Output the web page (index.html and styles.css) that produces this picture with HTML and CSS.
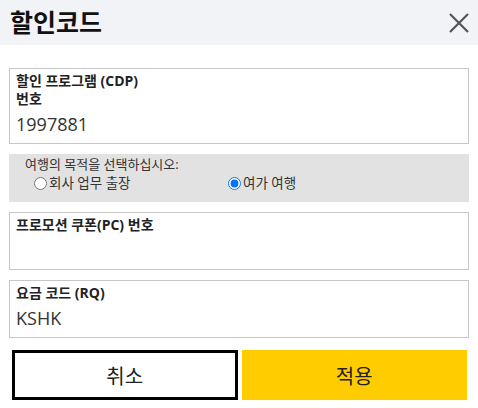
FILE: index.html
```html
<!DOCTYPE html>
<html lang="ko">
<head>
    <meta charset="UTF-8">
    <title>할인코드</title>
    <link rel="stylesheet" href="styles.css">
</head>
<body>
    <div class="header">
        <h1>할인코드</h1>
        <button class="close" type="button" aria-label="닫기">
            <svg width="20" height="20" viewBox="0 0 20 20"><path d="M1 1L19 19M19 1L1 19" stroke="#555" stroke-width="2.2" fill="none"/></svg>
        </button>
    </div>
    <form class="form">
        <div class="field">
            <label class="field-label narrow" for="cdp">할인 프로그램 (CDP) 번호</label>
            <input class="field-input" id="cdp" type="text" value="1997881">
        </div>
        <div class="purpose">
            <div class="purpose-title">여행의 목적을 선택하십시오:</div>
            <div class="purpose-options">
                <label class="option"><input type="radio" name="purpose">회사 업무 출장</label>
                <label class="option"><input type="radio" name="purpose" checked>여가 여행</label>
            </div>
        </div>
        <div class="field">
            <label class="field-label" for="pc">프로모션 쿠폰(PC) 번호</label>
            <input class="field-input" id="pc" type="text" value="">
        </div>
        <div class="field">
            <label class="field-label" for="rq">요금 코드 (RQ)</label>
            <input class="field-input" id="rq" type="text" value="KSHK">
        </div>
        <div class="actions">
            <button class="btn cancel" type="button">취소</button>
            <button class="btn apply" type="submit">적용</button>
        </div>
    </form>
</body>
</html>
```

FILE: styles.css
```css
body, html {
    margin: 0;
    padding: 0;
}
body {
    font-family: "Open Sans", "Noto Sans CJK KR", sans-serif;
    color: #222;
    background: #fff;
    word-break: keep-all;
}
.header {
    height: 45px;
    background: #f2f3f7;
    display: flex;
    align-items: center;
    justify-content: space-between;
    padding: 0 9px 0 10px;
}
h1 {
    margin: 0;
    font-size: 25px;
    font-weight: bold;
    line-height: 1;
    color: #111;
}
.close {
    border: 0;
    background: none;
    padding: 0;
    width: 20px;
    height: 20px;
    display: block;
}
.close svg {
    display: block;
}
.form {
    padding: 23px 9px 0;
}
.field {
    border: 1px solid #c6c6ca;
    padding: 3px 6px 7px;
    margin-bottom: 10px;
    display: flex;
    flex-direction: column;
}
.field-label {
    font-size: 14px;
    font-weight: bold;
    line-height: 18px;
    color: #222;
}
.field-label.narrow {
    max-width: 140px;
}
.field-input {
    border: 0;
    padding: 0;
    margin-top: 4px;
    font-family: inherit;
    font-size: 18px;
    line-height: 24px;
    height: 24px;
    color: #333;
    outline: none;
    background: transparent;
}
.purpose {
    background: #e2e2e2;
    height: 48px;
    box-sizing: border-box;
    padding: 1px 16px 0;
    margin-bottom: 10px;
    font-size: 13px;
    color: #333;
}
.purpose-title {
    line-height: 18px;
}
.purpose-options {
    display: grid;
    grid-template-columns: 194px 1fr;
    padding-left: 9px;
    line-height: 20px;
}
.option {
    display: flex;
    align-items: center;
    font-size: 13.5px;
}
.option input {
    margin: 0 2px 0 0;
    width: 13px;
    height: 13px;
}
.actions {
    display: grid;
    grid-template-columns: 1fr 1fr;
    gap: 4px;
    margin: 12px 2px 0 3px;
}
.btn {
    height: 50px;
    font-family: inherit;
    font-size: 20px;
    color: #222;
    box-sizing: border-box;
}
.cancel {
    background: #fff;
    border: 3px solid #000;
}
.apply {
    background: #ffcc00;
    border: 0;
}
```
